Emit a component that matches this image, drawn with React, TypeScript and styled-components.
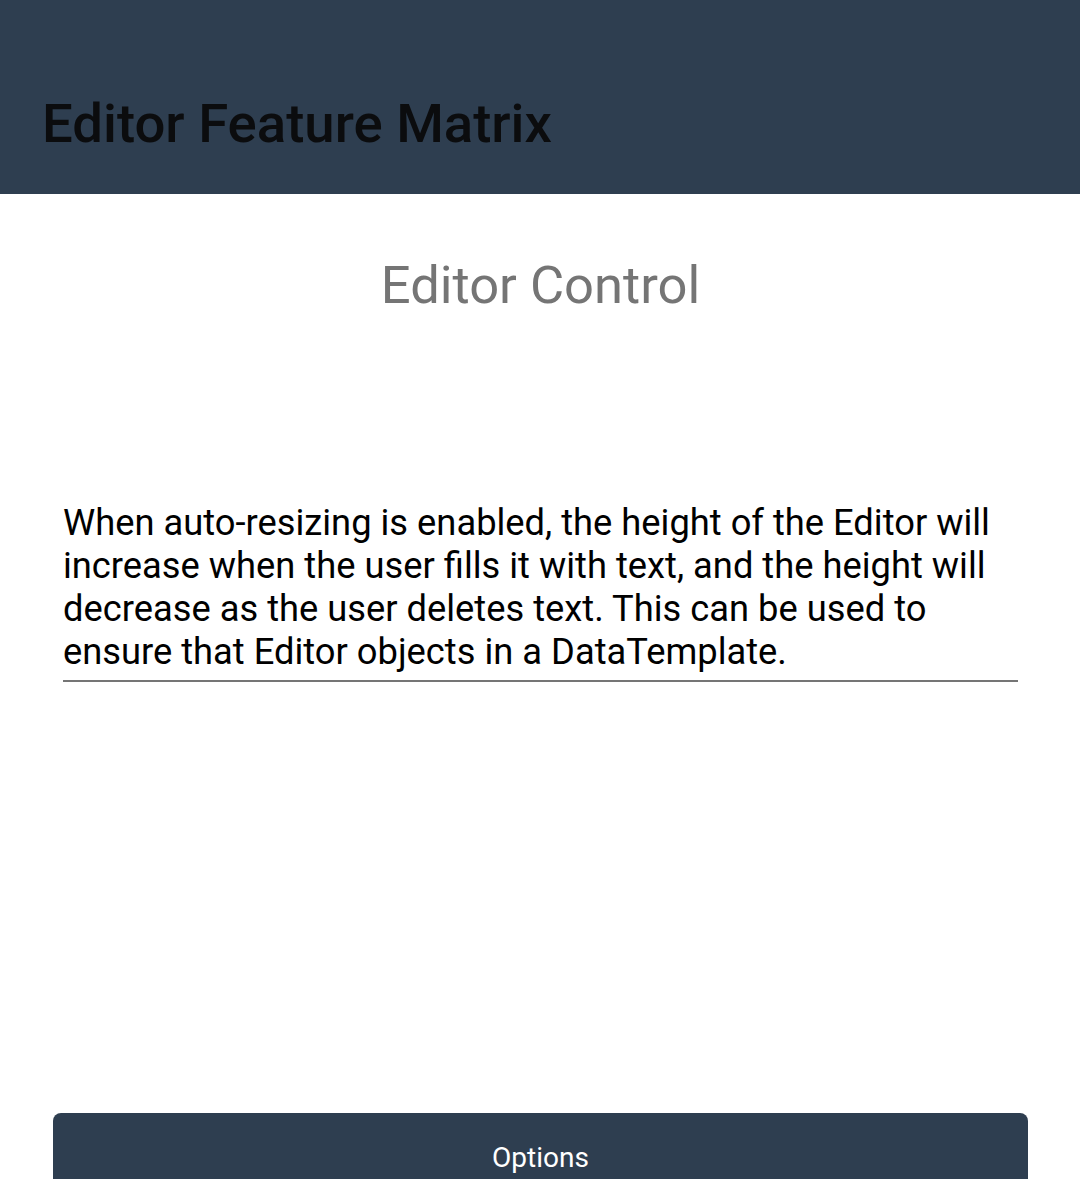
import React from "react";
import styled, { createGlobalStyle } from "styled-components";

const Global = createGlobalStyle`
  html, body { margin: 0; padding: 0; background: #ffffff; }
  body { font-family: Roboto, "Noto Sans", sans-serif; overflow: hidden; }
`;

const Page = styled.div`
  width: 1080px;
  height: 1179px;
  display: flex;
  flex-direction: column;
  background: #ffffff;
  overflow: hidden;
`;

const Header = styled.header`
  height: 194px;
  background: #2e3e50;
  display: flex;
  align-items: flex-end;
  padding: 0 0 44px 42px;
  box-sizing: border-box;
`;

const Title = styled.h1`
  margin: 0;
  font-family: Roboto, sans-serif;
  font-weight: 500;
  font-size: 54.5px;
  line-height: 1;
  color: #0b0c0e;
`;

const Content = styled.main`
  flex: 1;
  display: flex;
  flex-direction: column;
  padding: 0 52px 0 53px;
`;

const Subtitle = styled.h2`
  margin: 61px 0 0;
  text-align: center;
  font-family: Roboto, sans-serif;
  font-weight: 400;
  font-size: 52.5px;
  line-height: 61px;
  color: #757575;
`;

const EditorBox = styled.div`
  margin: 185px 10px 0 10px;
  border-bottom: 2px solid #757575;
  padding-bottom: 7px;
`;

const EditorText = styled.p`
  margin: 0;
  font-family: Roboto, sans-serif;
  font-size: 36.3px;
  line-height: 43px;
  color: #000000;
`;

const Spacer = styled.div`
  flex: 1;
`;

const OptionsButton = styled.button`
  height: 100px;
  margin-bottom: -34px;
  border: none;
  border-radius: 8px;
  background: #2e3e50;
  color: #ffffff;
  font-family: Roboto, sans-serif;
  font-size: 28px;
  display: flex;
  justify-content: center;
  align-items: flex-start;
  padding-top: 28px;
`;

export default function App() {
  return (
    <Page>
      <Global />
      <Header>
        <Title>Editor Feature Matrix</Title>
      </Header>
      <Content>
        <Subtitle>Editor Control</Subtitle>
        <EditorBox>
          <EditorText>
            When auto-resizing is enabled, the height of the Editor will increase when the user fills it with text, and the height will decrease as the user deletes text. This can be used to ensure that Editor objects in a DataTemplate.
          </EditorText>
        </EditorBox>
        <Spacer />
        <OptionsButton>Options</OptionsButton>
      </Content>
    </Page>
  );
}
